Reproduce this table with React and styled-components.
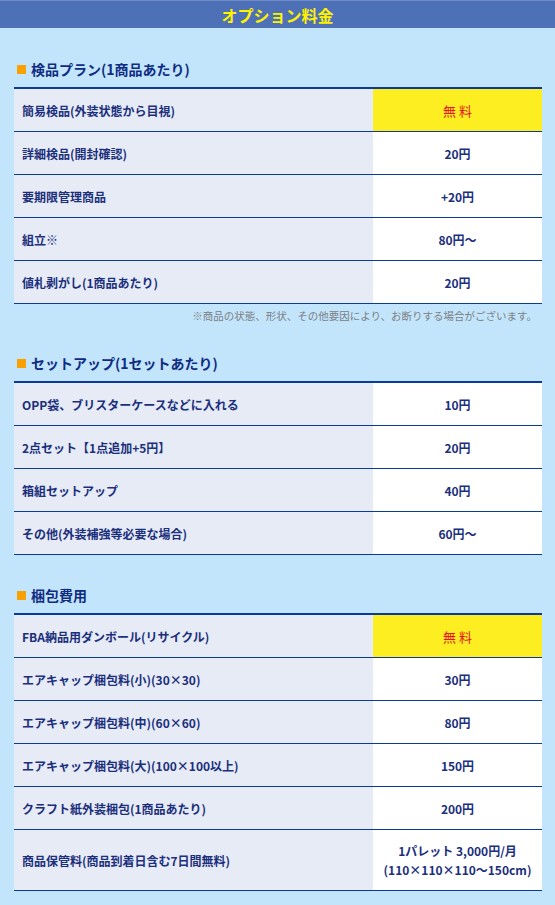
import React from "react";
import styled, { createGlobalStyle } from "styled-components";

const GlobalStyle = createGlobalStyle`
  html, body {
    margin: 0;
    padding: 0;
    background: #c2e5fc;
  }
  body {
    font-family: "Noto Sans CJK JP", "Noto Sans", sans-serif;
  }
`;

const Page = styled.div`
  min-height: 100vh;
  background: #c2e5fc;
`;

const Header = styled.header`
  height: 28px;
  box-sizing: border-box;
  border-top: 1px solid #6f8cc8;
  background: #4e70b6;
  display: flex;
  align-items: center;
  justify-content: center;
`;

const HeaderTitle = styled.h1`
  margin: 0;
  font-size: 16px;
  line-height: 20px;
  font-weight: 700;
  color: #fff200;
`;

const Main = styled.main`
  padding: 0 13px 12px 14px;
`;

const Section = styled.section`
  margin-top: ${(p) => (p.$first ? "31px" : "30px")};
`;

const SectionTitle = styled.h2`
  margin: 0 0 8px;
  height: 20px;
  display: flex;
  align-items: center;
  gap: 5px;
  padding-left: 3px;
  font-size: 14px;
  line-height: 20px;
  font-weight: 700;
  color: #0f2c82;
`;

const Square = styled.span`
  width: 9px;
  height: 9px;
  background: #f9a100;
  flex: none;
`;

const Table = styled.div`
  border-top: 2px solid #0b3a9b;
`;

const Row = styled.div`
  display: grid;
  grid-template-columns: 1fr 169px;
  border-bottom: 1px solid #0b3a9b;
`;

const LabelCell = styled.div`
  background: #e6ebf5;
  min-height: 42px;
  box-sizing: border-box;
  padding: 11px 8px;
  display: flex;
  align-items: center;
  font-size: 12px;
  line-height: 19px;
  font-weight: 700;
  color: #1b2f7c;
`;

const ValueCell = styled.div`
  background: ${(p) => (p.$free ? "#fcee21" : "#ffffff")};
  min-height: 42px;
  box-sizing: border-box;
  padding: 11px 4px;
  display: flex;
  flex-direction: column;
  align-items: center;
  justify-content: center;
  text-align: center;
  font-size: ${(p) => (p.$free ? "13px" : "12px")};
  line-height: 19px;
  font-weight: ${(p) => (p.$free ? 400 : 700)};
  color: ${(p) => (p.$free ? "#e8151d" : "#1b2f7c")};
`;

const Note = styled.p`
  margin: 5px 5px 0 0;
  text-align: right;
  font-size: 10.5px;
  line-height: 14px;
  color: #7d8084;
`;

const sections = [
  {
    title: "検品プラン(1商品あたり)",
    rows: [
      { label: "簡易検品(外装状態から目視)", value: ["無 料"], free: true },
      { label: "詳細検品(開封確認)", value: ["20円"] },
      { label: "要期限管理商品", value: ["+20円"] },
      { label: "組立※", value: ["80円〜"] },
      { label: "値札剥がし(1商品あたり)", value: ["20円"] },
    ],
    note: "※商品の状態、形状、その他要因により、お断りする場合がございます。",
  },
  {
    title: "セットアップ(1セットあたり)",
    rows: [
      { label: "OPP袋、ブリスターケースなどに入れる", value: ["10円"] },
      { label: "2点セット【1点追加+5円】", value: ["20円"] },
      { label: "箱組セットアップ", value: ["40円"] },
      { label: "その他(外装補強等必要な場合)", value: ["60円〜"] },
    ],
  },
  {
    title: "梱包費用",
    rows: [
      { label: "FBA納品用ダンボール(リサイクル)", value: ["無 料"], free: true },
      { label: "エアキャップ梱包料(小)(30×30)", value: ["30円"] },
      { label: "エアキャップ梱包料(中)(60×60)", value: ["80円"] },
      { label: "エアキャップ梱包料(大)(100×100以上)", value: ["150円"] },
      { label: "クラフト紙外装梱包(1商品あたり)", value: ["200円"] },
      {
        label: "商品保管料(商品到着日含む7日間無料)",
        value: ["1パレット 3,000円/月", "(110×110×110〜150cm)"],
      },
    ],
  },
];

export default function App() {
  return (
    <Page>
      <GlobalStyle />
      <Header>
        <HeaderTitle>オプション料金</HeaderTitle>
      </Header>
      <Main>
        {sections.map((s, i) => (
          <Section key={s.title} $first={i === 0}>
            <SectionTitle>
              <Square />
              {s.title}
            </SectionTitle>
            <Table>
              {s.rows.map((r) => (
                <Row key={r.label}>
                  <LabelCell>{r.label}</LabelCell>
                  <ValueCell $free={r.free}>
                    {r.value.map((v) => (
                      <span key={v}>{v}</span>
                    ))}
                  </ValueCell>
                </Row>
              ))}
            </Table>
            {s.note && <Note>{s.note}</Note>}
          </Section>
        ))}
      </Main>
    </Page>
  );
}
